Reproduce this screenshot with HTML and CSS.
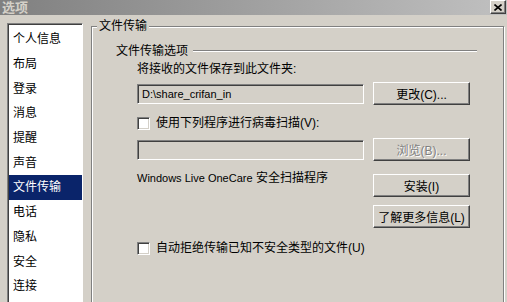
FILE: index.html
```html
<!DOCTYPE html>
<html lang="zh">
<head>
    <meta charset="UTF-8">
    <title>选项</title>
    <link rel="stylesheet" href="styles.css">
</head>
<body>

<div class="titlebar">
    <span class="title">选项</span>
    <button class="close-btn">
        <svg width="8" height="7" viewBox="0 0 8 7"><path d="M0.5 0.5 L7.5 6.5 M7.5 0.5 L0.5 6.5" stroke="#000" stroke-width="1.6"/></svg>
    </button>
</div>

<div class="main">
    <ul class="nav">
        <li>个人信息</li>
        <li>布局</li>
        <li>登录</li>
        <li>消息</li>
        <li>提醒</li>
        <li>声音</li>
        <li class="selected">文件传输</li>
        <li>电话</li>
        <li>隐私</li>
        <li>安全</li>
        <li>连接</li>
    </ul>

    <div class="frame">
        <div class="legend">文件传输</div>

        <div class="group-head">
            <span>文件传输选项</span>
            <span class="rule"></span>
        </div>

        <div class="content">
            <div class="label">将接收的文件保存到此文件夹:</div>
            <div class="row">
                <div class="field latin">D:\share_crifan_in</div>
                <button class="btn">更改(C)...</button>
            </div>
            <label class="check-row">
                <span class="checkbox"></span>
                <span>使用下列程序进行病毒扫描(V):</span>
            </label>
            <div class="row row-browse">
                <div class="field"></div>
                <button class="btn disabled">浏览(B)...</button>
            </div>
            <div class="row row-scan">
                <span class="scan-text"><span class="latin">Windows Live OneCare</span> 安全扫描程序</span>
                <button class="btn btn-install">安装(I)</button>
            </div>
            <div class="row row-more">
                <button class="btn">了解更多信息(L)</button>
            </div>
            <label class="check-row check-unsafe">
                <span class="checkbox"></span>
                <span>自动拒绝传输已知不安全类型的文件(U)</span>
            </label>
        </div>
    </div>
</div>

</body>
</html>
```

FILE: styles.css
```css
body {
    margin: 0;
    width: 507px;
    height: 302px;
    overflow: hidden;
    background-color: #d4d0c8;
    font-family: "Liberation Sans", "Noto Sans CJK SC", sans-serif;
    font-size: 12px;
    color: #000;
}

.titlebar {
    height: 15px;
    display: flex;
    justify-content: space-between;
    align-items: flex-start;
    background: linear-gradient(to right, #808080, #c0c0c0);
}

.title {
    padding-left: 2px;
    font-weight: bold;
    font-size: 13px;
    line-height: 15px;
    color: #d4d0c8;
}

.close-btn {
    width: 16px;
    height: 14px;
    margin-right: 1px;
    padding: 0;
    display: flex;
    justify-content: center;
    align-items: center;
    background-color: #d4d0c8;
    border: 1px solid;
    border-color: #fff #404040 #404040 #fff;
    box-shadow: inset -1px -1px 0 #808080;
}

.main {
    display: flex;
    align-items: flex-start;
    height: 287px;
    overflow: hidden;
    padding-top: 8px;
    box-sizing: border-box;
}

.nav {
    list-style: none;
    margin: 0 0 0 7px;
    padding: 3px 0 0 0;
    width: 76px;
    height: 280px;
    box-sizing: border-box;
    overflow: hidden;
    background-color: #fff;
    border: 1px solid;
    border-color: #808080 #fff #fff #808080;
    box-shadow: inset 1px 1px 0 #404040;
}

.nav li {
    height: 24.7px;
    line-height: 16px;
    padding-left: 4px;
    margin-left: 1px;
    display: flex;
    align-items: center;
}

.nav li.selected {
    background-color: #0a246a;
    color: #fff;
}

.frame {
    flex: none;
    width: 413px;
    height: 277px;
    box-sizing: border-box;
    margin: 3px 0 0 8px;
    border: 1px solid #808080;
    box-shadow: inset 1px 1px 0 #fff, 1px 1px 0 #fff;
}

.legend {
    width: fit-content;
    margin: -8px 0 0 5px;
    padding: 0 2px;
    line-height: 14px;
    background-color: #d4d0c8;
}

.group-head {
    display: flex;
    align-items: center;
    margin: 11px 26px 0 24px;
    line-height: 14px;
}

.rule {
    flex: 1;
    height: 0;
    margin-left: 5px;
    border-top: 1px solid #808080;
    border-bottom: 1px solid #fff;
}

.content {
    margin-left: 45px;
    width: 333px;
}

.label {
    margin-top: 4px;
    line-height: 14px;
}

.row {
    display: flex;
    justify-content: space-between;
    align-items: center;
    margin-top: 6px;
}

.field {
    width: 227px;
    height: 20px;
    box-sizing: border-box;
    padding: 0 4px;
    line-height: 18px;
    background-color: #d4d0c8;
    border: 1px solid;
    border-color: #808080 #fff #fff #808080;
    box-shadow: inset 1px 1px 0 #404040;
}

.latin {
    font-size: 11px;
}

.btn {
    width: 97px;
    height: 23px;
    padding: 0;
    font: inherit;
    color: #000;
    background-color: #d4d0c8;
    border: 1px solid;
    border-color: #fff #404040 #404040 #fff;
    box-shadow: inset -1px -1px 0 #808080;
}

.btn.disabled {
    color: #808080;
    text-shadow: 1px 1px 0 #fff;
}

.check-row {
    display: flex;
    align-items: center;
    margin-top: 11px;
    line-height: 14px;
}

.checkbox {
    width: 13px;
    height: 13px;
    box-sizing: border-box;
    margin-right: 6px;
    background-color: #fff;
    border: 1px solid;
    border-color: #808080 #fff #fff #808080;
    box-shadow: inset 1px 1px 0 #404040, inset -1px -1px 0 #d4d0c8;
}

.row-browse {
    margin-top: 8px;
}

.row-scan {
    align-items: flex-start;
    margin-top: 10px;
}

.scan-text {
    line-height: 14px;
}

.btn-install {
    margin-top: 3px;
}

.row-more {
    justify-content: flex-end;
    margin-top: 8px;
}

.check-unsafe {
    margin-top: 13px;
}
```
